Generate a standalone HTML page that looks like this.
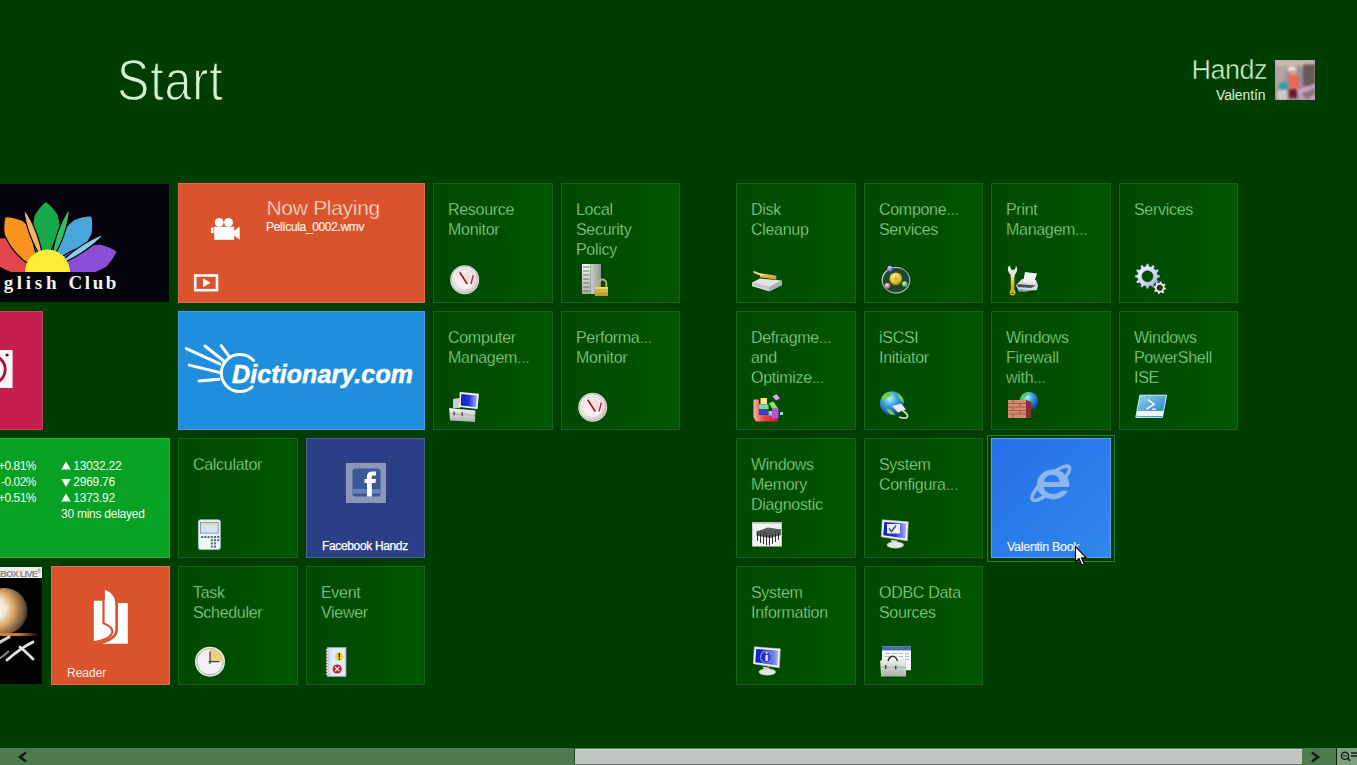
<!DOCTYPE html>
<html><head><meta charset="utf-8">
<style>
html,body{margin:0;padding:0;}
body{width:1357px;height:765px;overflow:hidden;background:#003d00;position:relative;font-family:"Liberation Sans",sans-serif;}
.a{position:absolute;}
.t{position:absolute;box-sizing:border-box;overflow:hidden;}
.g{background:linear-gradient(to right,#004a00 0%,#004c00 35%,#005700 100%);border:1px solid #1b611b;width:120px;height:120px;}
.lbl{position:absolute;left:14px;top:15.5px;color:#98de94;font-size:16px;line-height:20px;letter-spacing:-0.3px;white-space:nowrap;-webkit-text-stroke:0.35px #005000;}
.ic{position:absolute;left:14px;top:78px;width:32px;height:32px;}
.c::after{content:"";position:absolute;left:0;top:0;right:0;bottom:0;box-shadow:inset 0 0 0 1px rgba(255,255,255,0.16);}
.cap{position:absolute;color:#fff;font-size:12px;white-space:nowrap;}
</style></head><body>

<!-- header -->
<div class="a" style="left:117px;top:48px;color:#d6f2cf;font-size:57px;line-height:64px;letter-spacing:1px;-webkit-text-stroke:1.3px #003d00;transform:scaleX(0.85);transform-origin:0 0;">Start</div>
<div class="a" style="left:1150px;top:55px;width:117px;text-align:right;color:#d6f2cf;font-size:27px;line-height:30px;letter-spacing:-0.5px;-webkit-text-stroke:0.5px #003d00;">Handz</div>
<div class="a" style="left:1148.5px;top:87px;width:117px;text-align:right;color:#d6f2cf;font-size:14px;line-height:16px;letter-spacing:-0.1px;">Valentín</div>
<svg class="a" style="left:1275px;top:60px;" width="40" height="40">
<defs><linearGradient id="av" x1="0" y1="0" x2="1" y2="1"><stop offset="0" stop-color="#b0a0a0"/><stop offset="0.55" stop-color="#9a8a90"/><stop offset="1" stop-color="#b898b8"/></linearGradient>
<filter id="avb" x="-10%" y="-10%" width="120%" height="120%"><feGaussianBlur stdDeviation="1.1"/></filter><clipPath id="avc"><rect width="40" height="40"/></clipPath></defs>
<rect width="40" height="40" fill="url(#av)"/>
<g filter="url(#avb)" clip-path="url(#avc)">
<rect x="0" y="0" width="40" height="6" fill="#c8b8b0"/>
<rect x="28" y="4" width="12" height="22" fill="#5a5048" opacity="0.8"/>
<rect x="0" y="6" width="10" height="22" fill="#b8a8a8" opacity="0.7"/>
<path d="M22,30 L40,24 L40,40 L26,40 Z" fill="#c8a0c8"/>
<path d="M26,34 L40,28 L40,34 L32,40 Z" fill="#6a6a50" opacity="0.7"/>
<ellipse cx="17" cy="9" rx="4.5" ry="2.5" fill="#f0ece8"/>
<ellipse cx="18" cy="12.5" rx="3.2" ry="2.8" fill="#e0a090"/>
<path d="M13,16 C16,14 21,14 23,17 L25,29 L13,30 Z" fill="#e86a5a"/>
<rect x="14" y="29" width="8" height="9" fill="#6a1a28"/>
<ellipse cx="9" cy="26" rx="5.5" ry="4.5" fill="#30a0a0"/>
<rect x="2" y="30" width="10" height="10" fill="#e8e0e0" opacity="0.7"/>
</g></svg>

<!-- group 1 -->
<div class="t" style="left:-78px;top:184px;width:247px;height:118px;background:#05040c;">
<svg class="a" style="left:0;top:0" width="247" height="118">
<path transform="translate(125.5,88) rotate(-155.7)" d="M0,0 C17.0,-16.5 37.4,-18.0 54.4,-13.5 Q63.3,-7.5 68.0,0 Q63.3,7.5 54.4,13.5 C37.4,18.0 17.0,16.5 0,0 Z" fill="#e2474d" stroke="#05040c" stroke-width="1.2"/>
<path transform="translate(125.5,88) rotate(-127.4)" d="M0,0 C17.5,-14.3 38.4,-15.6 55.9,-11.7 Q65.0,-6.5 69.8,0 Q65.0,6.5 55.9,11.7 C38.4,15.6 17.5,14.3 0,0 Z" fill="#f7941d" stroke="#05040c" stroke-width="1.2"/>
<path transform="translate(125.5,88) rotate(-91.3)" d="M0,0 C17.7,-14.9 38.9,-16.2 56.7,-12.2 Q65.9,-6.8 70.8,0 Q65.9,6.8 56.7,12.2 C38.9,16.2 17.7,14.9 0,0 Z" fill="#17a84c" stroke="#05040c" stroke-width="1.2"/>
<path transform="translate(125.5,88) rotate(-51.9)" d="M0,0 C17.9,-14.3 39.4,-15.6 57.3,-11.7 Q66.6,-6.5 71.6,0 Q66.6,6.5 57.3,11.7 C39.4,15.6 17.9,14.3 0,0 Z" fill="#4aa7da" stroke="#05040c" stroke-width="1.2"/>
<path transform="translate(125.5,88) rotate(-16.5)" d="M0,0 C18.2,-14.9 40.0,-16.2 58.1,-12.2 Q67.6,-6.8 72.7,0 Q67.6,6.8 58.1,12.2 C40.0,16.2 18.2,14.9 0,0 Z" fill="#8b4fd6" stroke="#05040c" stroke-width="1.2"/>
<path transform="translate(125.5,88) rotate(-110.6)" d="M13.5,0 C26.9,-4.0 50.5,-5.0 67.3,0 C50.5,5.0 26.9,4.0 13.5,0 Z" fill="#f4b469" stroke="#05040c" stroke-width="1.2"/>
<path transform="translate(125.5,88) rotate(-70.9)" d="M13.5,0 C27.1,-4.0 50.8,-5.0 67.7,0 C50.8,5.0 27.1,4.0 13.5,0 Z" fill="#33c065" stroke="#05040c" stroke-width="1.2"/>
<path transform="translate(125.5,88) rotate(-33.7)" d="M13.7,0 C27.4,-3.6 51.4,-4.5 68.5,0 C51.4,4.5 27.4,3.6 13.7,0 Z" fill="#8ccbea" stroke="#05040c" stroke-width="1.2"/>
<path d="M103,88 A22.5,22.5 0 0 1 148,88 Z" fill="#fbec36"/>
<rect x="0" y="88" width="247" height="30" fill="#05040c"/>
</svg>
<div class="a" style="left:51px;top:88px;color:#f4f4f4;font-family:'Liberation Serif',serif;font-weight:bold;font-size:19px;line-height:22px;letter-spacing:3.7px;white-space:nowrap;">English</div>
<div class="a" style="left:146.5px;top:88px;color:#f4f4f4;font-family:'Liberation Serif',serif;font-weight:bold;font-size:19px;line-height:22px;letter-spacing:2.6px;white-space:nowrap;">Club</div>
</div>
<div class="t c" style="left:178px;top:183px;width:247px;height:120px;background:#da532c;">
<div class="a" style="left:88.5px;top:11.5px;color:#fbe3d8;font-size:21px;line-height:26px;letter-spacing:-0.3px;-webkit-text-stroke:0.4px #da532c;">Now Playing</div>
<div class="a" style="left:88px;top:37px;color:#fdeee6;font-size:12px;line-height:14px;letter-spacing:-0.35px;-webkit-text-stroke:0.2px #fdeee6;">Película_0002.wmv</div>
<svg class="a" style="left:0;top:0" width="247" height="120">
<circle cx="41.2" cy="39.4" r="4.4" fill="#fff"/><circle cx="50.5" cy="39.4" r="4.4" fill="#fff"/>
<rect x="36.2" y="43.7" width="20" height="13.1" fill="#fff"/>
<path d="M56,48 L61.7,43.5 L61.7,56.8 L56,52.5 Z" fill="#fff"/>
<rect x="33" y="44.5" width="2.6" height="5.5" fill="#fff"/>
<rect x="17.2" y="92.5" width="21.8" height="14.7" fill="none" stroke="#fff" stroke-width="2.6"/>
<path d="M25,95.3 L32.5,99.8 L25,104.2 Z" fill="#fff"/>
</svg></div>
<div class="t c" style="left:-77px;top:311px;width:120px;height:119px;background:#c41e4c;">
<svg class="a" style="left:0;top:0" width="120" height="119">
<rect x="40" y="39" width="49.6" height="38" fill="#fff5f7"/>
<circle cx="68" cy="58.5" r="14.2" fill="none" stroke="#a01238" stroke-width="2.8"/>
<circle cx="84.1" cy="44" r="1.6" fill="#5a1830"/>
</svg></div>
<div class="t c" style="left:178px;top:311px;width:247px;height:119px;background:#1f8fdc;">
<svg class="a" style="left:0;top:0" width="247" height="119">
<g stroke="#fff" stroke-width="3" stroke-linecap="round" fill="none">
<path d="M8.4,37.6 L41.9,52.9"/><path d="M27,35 L45.3,49.5"/><path d="M43.2,34.6 L50.4,44.4"/>
<path d="M11.3,54.1 L41,61.4"/><path d="M21.1,69.9 L41,68.2"/>
<path d="M75.5,49.5 A18.5,18.5 0 1 0 74.2,75.8" stroke-width="3"/>
</g></svg>
<div class="a" style="left:54px;top:48.5px;color:#fff;font-size:25px;line-height:28px;font-weight:bold;font-style:italic;letter-spacing:0.1px;-webkit-text-stroke:0.5px #fff;">Dictionary.com</div>
</div>
<div class="t c" style="left:-78px;top:438px;width:248px;height:120px;background:#07a123;color:#effff0;font-size:12px;line-height:16px;letter-spacing:-0.25px;">
<div class="a" style="left:63.5px;top:20px;width:50.5px;text-align:right;letter-spacing:-0.5px;">+0.81%<br>-0.02%<br>+0.51%</div>
<div class="a" style="left:139px;top:20px;">&nbsp;&nbsp;&nbsp;&nbsp;13032.22<br>&nbsp;&nbsp;&nbsp;&nbsp;2969.76<br>&nbsp;&nbsp;&nbsp;&nbsp;1373.92<br>30 mins delayed</div>
<svg class="a" style="left:0;top:0" width="248" height="119">
<path d="M139.3,31.5 L144,23.5 L148.8,31.5 Z M139.3,41 L148.8,41 L144,49 Z M139.3,63.5 L144,55.5 L148.8,63.5 Z" fill="#effff0"/>
</svg>
</div>
<div class="t g" style="left:178px;top:438px;width:120px;height:120px;"><div class="lbl">Calculator</div></div>
<div class="t c" style="left:306px;top:438px;width:119px;height:120px;background:#2a3f85;">
<svg class="a" style="left:0;top:0" width="119" height="119">
<rect x="40" y="25" width="40" height="40" fill="#8c96b6"/>
<rect x="46.5" y="30.5" width="28" height="28" rx="3" fill="#3b5998"/>
<rect x="46.5" y="51" width="28" height="4.5" fill="#6b82b8"/>
<path d="M61,58.5 L61,45 L58.5,45 L58.5,41 L61,41 L61,38.5 C61,35 63,33.5 66.5,33.5 L70,33.5 L70,37.5 L67.5,37.5 C66.2,37.5 65.8,38 65.8,39.2 L65.8,41 L70,41 L69.5,45 L65.8,45 L65.8,58.5 Z" fill="#fff"/>
</svg>
<div class="cap" style="left:16px;top:100.5px;font-size:12px;line-height:14px;letter-spacing:-0.35px;-webkit-text-stroke:0.25px #fff;">Facebook Handz</div>
</div>
<div class="t" style="left:-77px;top:567px;width:119px;height:117px;background:#030203;">
<div class="a" style="left:0;top:0;width:119px;height:11px;background:#f2efe8;"></div>
<div class="a" style="left:71.6px;top:-2.3px;color:#8a8a8e;font-size:9.5px;line-height:12px;font-weight:bold;letter-spacing:-0.9px;white-space:nowrap;">XBOX LIVE<sup style="font-size:5px;vertical-align:4px">®</sup></div>
<svg class="a" style="left:0;top:0" width="119" height="117">
<defs><radialGradient id="xs" cx="0.3" cy="0.45" r="0.75"><stop offset="0" stop-color="#ffffff"/><stop offset="0.3" stop-color="#f4e4cc"/><stop offset="0.55" stop-color="#d8a060"/><stop offset="0.85" stop-color="#6a5038"/><stop offset="1" stop-color="#1a120a"/></radialGradient>
<linearGradient id="xr" x1="0" x2="1"><stop offset="0" stop-color="#e09040"/><stop offset="0.7" stop-color="#c87a2a"/><stop offset="1" stop-color="#c87a2a" stop-opacity="0"/></linearGradient></defs>
<circle cx="81.5" cy="44" r="23" fill="url(#xs)"/>
<rect x="50" y="66" width="66" height="3" fill="url(#xr)"/>
<path d="M60,88 C66,80 76,76 86,70" stroke="#d8d2cc" stroke-width="3.2" fill="none" stroke-linecap="round"/>
<path d="M84,93 C92,86 100,80 110,75 M97,80 C102,84 106,88 110,92" stroke="#e8e4e0" stroke-width="2.8" fill="none" stroke-linecap="round"/>
<path d="M58,98 C70,96 80,90 86,84" stroke="#8a8480" stroke-width="2" fill="none"/>
</svg></div>
<div class="t c" style="left:51px;top:566px;width:119px;height:119px;background:#da532c;">
<svg class="a" style="left:0;top:0" width="119" height="119">
<path d="M42.8,34.7 L53.9,34.7 L53.9,23.7 C59.5,26 64.1,30 64.1,36 L64.1,36.9 L76.8,36.9 L76.8,77.7 L46,77.7 L42.8,76 Z" fill="#fff"/>
<path d="M52.5,34.5 L52.5,57.3 C58,59.5 61.5,62 61.4,66 C60.5,71 53,74.5 42,76.4" stroke="#da532c" stroke-width="2.2" fill="none"/>
<path d="M65.6,36.5 L65.6,65 C65,71 57,75.5 44,78.5" stroke="#da532c" stroke-width="2.6" fill="none"/>
</svg>
<div class="cap" style="left:16px;top:99.5px;font-size:12px;line-height:14px;color:#fdeee6;">Reader</div>
</div>
</div>
<div class="t g" style="left:178px;top:566px;width:120px;height:119px;"><div class="lbl">Task<br>Scheduler</div></div>
<div class="t g" style="left:306px;top:566px;width:119px;height:119px;"><div class="lbl">Event<br>Viewer</div></div>

<!-- group 2 -->
<div class="t g" style="left:433px;top:183px;width:120px;height:120px;"><div class="lbl">Resource<br>Monitor</div></div>
<div class="t g" style="left:561px;top:183px;width:119px;height:120px;"><div class="lbl">Local<br>Security<br>Policy</div></div>
<div class="t g" style="left:433px;top:311px;width:120px;height:119px;"><div class="lbl">Computer<br>Managem...</div></div>
<div class="t g" style="left:561px;top:311px;width:119px;height:119px;"><div class="lbl">Performa...<br>Monitor</div></div>

<!-- group 3 -->
<div class="t g" style="left:736px;top:183px;width:120px;height:120px;"><div class="lbl">Disk<br>Cleanup</div></div>
<div class="t g" style="left:864px;top:183px;width:119px;height:120px;"><div class="lbl">Compone...<br>Services</div></div>
<div class="t g" style="left:991px;top:183px;width:120px;height:120px;"><div class="lbl">Print<br>Managem...</div></div>
<div class="t g" style="left:1119px;top:183px;width:119px;height:120px;"><div class="lbl">Services</div></div>
<div class="t g" style="left:736px;top:311px;width:120px;height:119px;"><div class="lbl">Defragme...<br>and<br>Optimize...</div></div>
<div class="t g" style="left:864px;top:311px;width:119px;height:119px;"><div class="lbl">iSCSI<br>Initiator</div></div>
<div class="t g" style="left:991px;top:311px;width:120px;height:119px;"><div class="lbl">Windows<br>Firewall<br>with...</div></div>
<div class="t g" style="left:1119px;top:311px;width:119px;height:119px;"><div class="lbl">Windows<br>PowerShell<br>ISE</div></div>
<div class="t g" style="left:736px;top:438px;width:120px;height:120px;"><div class="lbl">Windows<br>Memory<br>Diagnostic</div></div>
<div class="t g" style="left:864px;top:438px;width:119px;height:120px;"><div class="lbl">System<br>Configura...</div></div>
<div class="a" style="left:987px;top:434.5px;width:128px;height:127px;box-sizing:border-box;border:1.5px solid #2a7a3a;background:#003d00;"></div>
<div class="t" style="left:991px;top:438px;width:120px;height:120px;background:linear-gradient(135deg,#2670e8,#3088ec);border:1px solid #5a9ef0;">
<svg class="a" style="left:0;top:0" width="120" height="120">
<defs><mask id="iem"><rect width="120" height="120" fill="#fff"/><ellipse cx="61" cy="45.5" rx="15.8" ry="14.5" fill="#000"/></mask>
<mask id="ieh"><rect width="120" height="120" fill="#fff"/><path d="M52.3,42.9 A7.7,7.2 0 0 1 67.7,42.9 Z M51.8,48.1 C52.5,52.5 56,55 61,55 C64.5,55 67.5,53.8 69.5,51.8 L80,51.8 L80,48.1 Z" fill="#000"/></mask></defs>
<g mask="url(#ieh)"><ellipse cx="61" cy="45.5" rx="16.3" ry="15" fill="#8cb6ec"/></g>
<g mask="url(#iem)"><ellipse transform="translate(58.8,44.2) rotate(-42)" rx="24.6" ry="6.8" fill="none" stroke="#8cb6ec" stroke-width="3.6"/></g>
</svg>
<div class="cap" style="left:15px;top:100.5px;font-size:12.5px;line-height:14px;color:#eef4ff;letter-spacing:-0.3px;-webkit-text-stroke:0.2px #eef4ff;">Valentin Book</div>
</div>
<svg class="a" style="left:1074px;top:545px;" width="14" height="22"><path d="M1.5,1.5 L1.5,17 L5,13.5 L7.8,20 L10.2,19 L7.5,12.8 L12.3,12.8 Z" fill="#fff" stroke="#000" stroke-width="1.1" stroke-linejoin="round"/></svg>
<div class="t g" style="left:736px;top:566px;width:120px;height:119px;"><div class="lbl">System<br>Information</div></div>
<div class="t g" style="left:864px;top:566px;width:119px;height:119px;"><div class="lbl">ODBC Data<br>Sources</div></div>

<!-- icons -->
<svg class="a" style="left:0;top:0;" width="1357" height="765">
<defs>
<radialGradient id="gface" cx="0.4" cy="0.35" r="0.7"><stop offset="0" stop-color="#ffffff"/><stop offset="0.7" stop-color="#f0e8ec"/><stop offset="1" stop-color="#c9c4c8"/></radialGradient>
<linearGradient id="gsilver" x1="0" y1="0" x2="0" y2="1"><stop offset="0" stop-color="#f4f6f4"/><stop offset="1" stop-color="#a9b0a9"/></linearGradient>
<linearGradient id="gside" x1="0" y1="0" x2="1" y2="0"><stop offset="0" stop-color="#c9d0cc"/><stop offset="1" stop-color="#8c9690"/></linearGradient>
<linearGradient id="ggold" x1="0" y1="0" x2="0" y2="1"><stop offset="0" stop-color="#f7df6a"/><stop offset="1" stop-color="#c0901c"/></linearGradient>
<linearGradient id="gscreen" x1="0" y1="0" x2="1" y2="0"><stop offset="0" stop-color="#1020b8"/><stop offset="0.5" stop-color="#2436d0"/><stop offset="1" stop-color="#aab4f0"/></linearGradient>
<linearGradient id="gps" x1="0" y1="0" x2="1" y2="1"><stop offset="0" stop-color="#8fd6f4"/><stop offset="1" stop-color="#1d78c0"/></linearGradient>
<radialGradient id="gglobe" cx="0.4" cy="0.3" r="0.7"><stop offset="0" stop-color="#b8f4ff"/><stop offset="0.45" stop-color="#3aa0e0"/><stop offset="1" stop-color="#1c3aa8"/></radialGradient>
<radialGradient id="gyel" cx="0.4" cy="0.35" r="0.7"><stop offset="0" stop-color="#fff7a0"/><stop offset="0.6" stop-color="#e8c020"/><stop offset="1" stop-color="#8a6a00"/></radialGradient>
<g id="gauge">
<circle r="14.5" fill="#d7dcd7"/>
<circle r="13.2" fill="url(#gface)" stroke="#aeb8ae" stroke-width="0.8"/>
<circle r="10.5" fill="#f6eef0" stroke="#d8c6c8" stroke-width="0.8"/>
<path d="M-5,-7.5 L2.6,4.3" stroke="#9a1c22" stroke-width="1.7" fill="none"/>
<path d="M6.3,4.3 L8.6,-4.6" stroke="#b8282e" stroke-width="1.5" fill="none"/>
<path d="M-2,-6 L4,2 L7,-3 L4,-8 Z" fill="#f2d0cc" opacity="0.6"/>
</g>
<g id="monitor">
<path d="M0.5,0 L26.5,2 L25.5,21 L-0.5,17 Z" fill="#eef2f6" stroke="#b8c2cc" stroke-width="0.6"/>
<path d="M2.5,2.2 L24.5,3.8 L23.6,18.8 L1.5,15.4 Z" fill="url(#gscreen)"/>
<path d="M9,20 L16,21 L15,23 L10,22.5 Z" fill="#d8dcd8"/>
<ellipse cx="13.5" cy="25.2" rx="8.4" ry="3.2" fill="#e4e6e2" stroke="#b0b8b0" stroke-width="0.5"/>
</g>
<g id="toolbox">
<path d="M0,14 L4,8 L22,9 L26,15 L25,30 L1,30 Z" fill="#d9e0dc"/>
<path d="M0,14 L26,15 L25,30 L1,30 Z" fill="url(#gsilver)"/>
<path d="M0,20 L26,21" stroke="#9aa4a0" stroke-width="0.8"/>
<rect x="4.5" y="18" width="1.5" height="4" fill="#4a5450"/><rect x="18" y="19" width="1.5" height="4" fill="#4a5450"/>
</g>
</defs>

<!-- Resource Monitor / Performance Monitor -->
<use href="#gauge" x="464.7" y="279.7"/>
<use href="#gauge" x="592.7" y="407.2"/>

<!-- Local Security Policy -->
<rect x="582" y="264" width="8.5" height="30" fill="url(#gsilver)"/>
<g stroke="#5f6a66" stroke-width="0.9"><path d="M583,267 H589.5 M583,271 H589.5 M583,275 H589.5 M583,279 H589.5 M583,283 H589.5 M583,287 H589.5 M583,291 H589.5"/></g>
<rect x="590.5" y="264" width="10.5" height="30" fill="url(#gside)"/>
<path d="M598.3,287 L598.3,283.5 A4,4 0 0 1 606.3,283.5 L606.3,287" stroke="#c8b46a" stroke-width="1.8" fill="none"/>
<rect x="595" y="287" width="13" height="9" fill="url(#ggold)"/>
<path d="M595,290 H608 M595,293 H608" stroke="#b08420" stroke-width="0.6"/>

<!-- Computer Management -->
<path d="M453,399 L459.5,398 L460,408 L453,408 Z" fill="#c8d0cc"/>
<path d="M459.7,392 L479,393.8 L477.5,409 L459.2,407 Z" fill="#f0f4fa"/>
<path d="M461.2,394 L477.2,395.4 L476,407.2 L460.8,405.6 Z" fill="url(#gscreen)"/>
<path d="M449.2,408 L475.4,410.5 L475,422 L450,420.5 Z" fill="url(#gsilver)"/>
<path d="M449.5,413.5 L475,415.5" stroke="#9aa4a0" stroke-width="0.7"/>
<rect x="453.5" y="411.5" width="1.4" height="4" fill="#4a5450"/><rect x="461.5" y="412" width="1.4" height="4" fill="#4a5450"/>
<!-- Calculator -->
<rect x="198.4" y="519.8" width="22" height="29.8" rx="2" fill="#e6f4fb" stroke="#a8c8d8" stroke-width="0.7"/>
<rect x="200.6" y="522.5" width="17.6" height="10.6" fill="#d4e2f2" stroke="#6a7c96" stroke-width="0.7"/>
<rect x="201.5" y="523.3" width="15.8" height="2" fill="#e8d8a0"/>
<g fill="#56686c">
<rect x="201.2" y="536" width="2" height="2"/><rect x="204.4" y="536" width="2" height="2"/><rect x="207.6" y="536" width="2" height="2"/><rect x="210.8" y="536" width="2" height="2"/><rect x="214" y="536" width="2" height="2"/><rect x="217.2" y="536" width="2" height="2"/>
<rect x="210.8" y="539.2" width="2" height="2"/><rect x="214" y="539.2" width="2" height="2"/><rect x="217.2" y="539.2" width="2" height="2"/>
<rect x="210.8" y="542.4" width="2" height="2"/><rect x="214" y="542.4" width="2" height="2"/>
<rect x="210.8" y="545.6" width="2" height="2"/><rect x="214" y="545.6" width="2" height="2"/>
</g>
<g fill="#ffffff"><rect x="201.2" y="539.2" width="2.4" height="2"/><rect x="204.4" y="539.2" width="2.4" height="2"/><rect x="207.6" y="539.2" width="2.4" height="2"/>
<rect x="201.2" y="542.4" width="2.4" height="2"/><rect x="204.4" y="542.4" width="2.4" height="2"/><rect x="207.6" y="542.4" width="2.4" height="2"/>
<rect x="201.2" y="545.6" width="2.4" height="2"/><rect x="204.4" y="545.6" width="2.4" height="2"/><rect x="207.6" y="545.6" width="2.4" height="2"/></g>

<!-- Task Scheduler clock -->
<circle cx="210" cy="661.7" r="15" fill="#e4efe6"/>
<circle cx="210" cy="661.7" r="13.2" fill="#f2f0f6" stroke="#9aa09a" stroke-width="0.8"/>
<path d="M210,661.7 L210,648.5 A13.2,13.2 0 0 1 223.2,661.7 Z" fill="#f1cf82"/>
<path d="M210,651.5 L210,664 M208.5,661.7 L219.5,661.7" stroke="#3f4a48" stroke-width="1.3"/>

<!-- Event Viewer -->
<rect x="327.5" y="647.5" width="18.5" height="29" fill="#d8def4" stroke="#98a2b8" stroke-width="0.8"/>
<rect x="331.5" y="649" width="13" height="26" fill="#e6eaf8"/>
<g fill="#f4f6f4" stroke="#8a9290" stroke-width="0.5"><circle cx="327.3" cy="650" r="1.2"/><circle cx="327.3" cy="653" r="1.2"/><circle cx="327.3" cy="656" r="1.2"/><circle cx="327.3" cy="659" r="1.2"/><circle cx="327.3" cy="662" r="1.2"/><circle cx="327.3" cy="665" r="1.2"/><circle cx="327.3" cy="668" r="1.2"/><circle cx="327.3" cy="671" r="1.2"/><circle cx="327.3" cy="674" r="1.2"/></g>
<circle cx="339.2" cy="656.5" r="4.3" fill="#ecd640"/>
<rect x="338.6" y="653" width="1.4" height="4.5" fill="#1a1a10"/><rect x="338.6" y="658.5" width="1.4" height="1.4" fill="#1a1a10"/>
<circle cx="337.2" cy="669" r="4.6" fill="#c0282c"/>
<path d="M335,666.8 L339.4,671.2 M339.4,666.8 L335,671.2" stroke="#fff" stroke-width="1.2"/>

<!-- Disk Cleanup -->
<path d="M752,282.6 L760,278.5 L782,280.5 L769.5,287.3 Z" fill="#e8e2ea"/>
<path d="M752,282.6 L769.5,287.3 L769.5,291.5 L752,286.2 Z" fill="#d8dcd6"/>
<path d="M769.5,287.3 L782,280.5 L782,285.2 L769.5,291.5 Z" fill="#b0b4c0"/>
<path d="M753,284.5 L768,288.5" stroke="#a8a0b8" stroke-width="0.6"/>
<path d="M760,273.2 L776.3,275.8 L776.3,279.5 L760,277.3 Z" fill="url(#ggold)"/>
<path d="M754.3,272.1 L762.2,275.3" stroke="#e8d890" stroke-width="2" stroke-linecap="round"/>
<path d="M762,276.5 L776,279" stroke="#f0a040" stroke-width="0.8"/>
<!-- Component Services -->
<defs><linearGradient id="gring" x1="0" y1="0" x2="1" y2="1"><stop offset="0" stop-color="#e8f4ec"/><stop offset="0.5" stop-color="#6a9a7a"/><stop offset="1" stop-color="#a8c8b0"/></linearGradient>
<radialGradient id="gbl" cx="0.35" cy="0.3" r="0.7"><stop offset="0" stop-color="#d8d8ff"/><stop offset="1" stop-color="#4a48b8"/></radialGradient>
<radialGradient id="gpk" cx="0.35" cy="0.3" r="0.7"><stop offset="0" stop-color="#ffe0e8"/><stop offset="1" stop-color="#c85a6a"/></radialGradient>
<radialGradient id="ggr" cx="0.35" cy="0.3" r="0.7"><stop offset="0" stop-color="#d8ffd0"/><stop offset="1" stop-color="#3a9a4a"/></radialGradient></defs>
<ellipse cx="896" cy="280.2" rx="14.5" ry="13.5" fill="#1a4a2c" stroke="#0e2a18" stroke-width="2"/>
<ellipse cx="896" cy="280.2" rx="13.8" ry="12.8" fill="none" stroke="url(#gring)" stroke-width="1.4"/>
<circle cx="895.9" cy="278.9" r="6.4" fill="url(#gyel)"/>
<path d="M895.9,274.8 V283.2 M891.7,278.9 H900.1" stroke="#f8e070" stroke-width="1.2"/>
<path d="M895.9,275.5 V282.5 M892.5,278.9 H899.3" stroke="#a86a08" stroke-width="0.5"/>
<circle cx="890.2" cy="268.8" r="3" fill="url(#gbl)"/>
<circle cx="887.5" cy="285.7" r="2.8" fill="url(#gpk)"/>
<circle cx="904.8" cy="284.1" r="2.8" fill="url(#ggr)"/>
<!-- Print Management -->
<path d="M1016,285 L1022,279 L1036,280 L1038,285 L1037,290 L1019,291.5 Z" fill="#d6dada"/>
<path d="M1025,272 L1037,273.5 L1034,283 L1023,282 Z" fill="#f4f2f4"/>
<path d="M1017,284 L1036,285.5 L1031,288 L1018,287 Z" fill="#4a4e5a"/>
<path d="M1019,289 L1028,290 L1027,292 L1019,291 Z" fill="#74a8c8"/>
<rect x="1010.8" y="276" width="3.6" height="17" fill="url(#ggold)"/><circle cx="1012.6" cy="292.5" r="2.2" fill="none" stroke="#d8b040" stroke-width="1.4"/>
<path d="M1009.5,265.5 C1007,267.5 1007.5,272 1010.5,274.5 L1010.8,277 L1014.4,277 L1014.8,274.5 C1017.5,272.5 1018,268 1016,266 L1014.8,269.5 L1011.8,270 Z" fill="#e2e6e8"/>

<!-- Services gears -->
<defs><linearGradient id="ggear" x1="0" y1="0" x2="1" y2="1"><stop offset="0" stop-color="#f4f8ff"/><stop offset="0.6" stop-color="#c8d8f0"/><stop offset="1" stop-color="#8aa0c8"/></linearGradient></defs>
<g transform="translate(1147.5,276.3)"><path d="M10.07,-1.60 L12.55,-1.12 L12.55,1.12 L10.07,1.60 L9.52,3.66 L11.43,5.31 L10.31,7.25 L7.93,6.42 L6.42,7.93 L7.25,10.31 L5.31,11.43 L3.66,9.52 L1.60,10.07 L1.12,12.55 L-1.12,12.55 L-1.60,10.07 L-3.66,9.52 L-5.31,11.43 L-7.25,10.31 L-6.42,7.93 L-7.93,6.42 L-10.31,7.25 L-11.43,5.31 L-9.52,3.66 L-10.07,1.60 L-12.55,1.12 L-12.55,-1.12 L-10.07,-1.60 L-9.52,-3.66 L-11.43,-5.31 L-10.31,-7.25 L-7.93,-6.42 L-6.42,-7.93 L-7.25,-10.31 L-5.31,-11.43 L-3.66,-9.52 L-1.60,-10.07 L-1.12,-12.55 L1.12,-12.55 L1.60,-10.07 L3.66,-9.52 L5.31,-11.43 L7.25,-10.31 L6.42,-7.93 L7.93,-6.42 L10.31,-7.25 L11.43,-5.31 L9.52,-3.66 Z M5.6,0 A5.6,5.6 0 1 0 -5.6,0 A5.6,5.6 0 1 0 5.6,0 Z" fill="url(#ggear)" fill-rule="evenodd" stroke="#1a3a4a" stroke-width="0.5"/></g>
<g transform="translate(1159.8,287.8) rotate(10)"><path d="M5.06,-1.21 L6.74,-0.91 L6.74,0.91 L5.06,1.21 L4.43,2.72 L5.41,4.13 L4.13,5.41 L2.72,4.43 L1.21,5.06 L0.91,6.74 L-0.91,6.74 L-1.21,5.06 L-2.72,4.43 L-4.13,5.41 L-5.41,4.13 L-4.43,2.72 L-5.06,1.21 L-6.74,0.91 L-6.74,-0.91 L-5.06,-1.21 L-4.43,-2.72 L-5.41,-4.13 L-4.13,-5.41 L-2.72,-4.43 L-1.21,-5.06 L-0.91,-6.74 L0.91,-6.74 L1.21,-5.06 L2.72,-4.43 L4.13,-5.41 L5.41,-4.13 L4.43,-2.72 Z M2.8,0 A2.8,2.8 0 1 0 -2.8,0 A2.8,2.8 0 1 0 2.8,0 Z" fill="#eef4ee" fill-rule="evenodd" stroke="#1a2a2a" stroke-width="0.6"/></g>
<!-- Defrag -->
<defs><linearGradient id="gdf" x1="0" y1="0" x2="1" y2="0"><stop offset="0" stop-color="#ffb0a8"/><stop offset="0.4" stop-color="#e84a40"/><stop offset="1" stop-color="#c02020"/></linearGradient></defs>
<path d="M753.5,399.5 L758.8,399.5 L758.8,415 L776,415 L778.5,421.5 L756,421.5 L753.5,417 Z" fill="url(#gdf)"/>
<rect x="760.5" y="398" width="6.5" height="6" fill="#f8e890"/>
<rect x="759" y="404.3" width="9.5" height="5" fill="#88d8a0"/>
<rect x="759" y="409.5" width="9" height="5.2" fill="#3040e8"/>
<rect x="768.5" y="411" width="4" height="4.5" fill="#80d0f0"/>
<rect x="772" y="408.5" width="6.5" height="10" fill="#c050e0"/>
<path d="M769,403 L773.5,401.5 L778,408.5 L772,408.5 Z" fill="#90e070"/>
<path d="M772.5,396.5 L776.5,394 L780,398.5 L776,400.5 Z" fill="#e0a0f8"/>
<rect x="780" y="412" width="3" height="3" fill="#80e0d0"/>
<!-- iSCSI globe -->
<circle cx="892" cy="403.2" r="12" fill="url(#gglobe)"/>
<path d="M882,397 C885,392 890,391 893,393 C890,397 887,399 882,400 Z M897,393 C901,395 904,398 903.8,403 C901,402 899,399 897,393 Z M886,409 C889,408 893,411 895,415 C891,415.5 888,413 886,409 Z" fill="#6cd24a"/>
<path d="M892,406 L901,403.5 L906,409.5 L898,412.5 Z" fill="#e4ecec"/>
<path d="M902,410 C906,413 909,415 907,417.5 C905,419 902,418 899,417" stroke="#c8d6d0" stroke-width="1.8" fill="none"/>

<!-- Firewall -->
<circle cx="1028.9" cy="400.9" r="9.2" fill="url(#gglobe)"/>
<path d="M1020,399 C1022,394 1026,392 1030,392.5 C1027,396 1024,399 1020,400 Z" fill="#5ace4a"/>
<rect x="1008" y="400" width="18" height="18" fill="#d68a72"/>
<path d="M1026,400 L1031.3,402 L1031.3,418 L1026,418 Z" fill="#8a3030"/>
<g stroke="#a04c3c" stroke-width="0.8"><path d="M1008,403.5 H1026 M1008,407 H1026 M1008,410.5 H1026 M1008,414 H1026 M1013,400 V403.5 M1020,403.5 V407 M1013,407 V410.5 M1020,410.5 V414 M1013,414 V418"/></g>

<!-- PowerShell -->
<path d="M1139.9,395.2 L1166.6,395.2 L1162.4,417.4 L1135.8,417.4 Z" fill="url(#gps)" stroke="#cdeefa" stroke-width="1"/>
<path d="M1137.5,411 L1163.5,411 L1162.6,416 L1136.6,416 Z" fill="#eef4f6"/>
<path d="M1148,399.5 L1154,404.5 L1146.5,409" stroke="#ffffff" stroke-width="1.6" fill="none"/>
<path d="M1152,409.2 H1156" stroke="#ffffff" stroke-width="1.2"/>

<!-- Memory Diagnostic -->
<rect x="752.2" y="522.2" width="29.6" height="24.3" fill="#f4f2f6"/>
<rect x="752.2" y="522.2" width="29.6" height="1.5" fill="#b8c4b8"/>
<path d="M756.5,531.5 L768,527.5 L781,529.5 L781,535 L770,538 L756.5,535.5 Z" fill="#5a5e5c"/>
<path d="M756.5,531.5 L770,533.5 L781,529.5" stroke="#3a3c3a" stroke-width="0.6" fill="none"/>
<g stroke="#1a1c1a" stroke-width="0.9"><path d="M757.5,533 V541 M760.5,533.5 V543 M763.5,534 V544 M766.5,534.5 V545 M769.5,535 V545.5 M772.5,534.5 V544 M775.5,533.5 V542 M778.5,532.5 V540"/></g>
<!-- System Configuration -->
<use href="#monitor" x="881.8" y="519.8"/>
<rect x="887" y="524" width="13" height="9.5" fill="#eef0fa"/>
<path d="M889,528.5 L891.5,531.5 L896,525.5" stroke="#2a5a80" stroke-width="1.6" fill="none"/>

<!-- System Information -->
<use href="#monitor" x="753.8" y="646.8"/>
<circle cx="766.5" cy="657" r="6" fill="none" stroke="#8090e0" stroke-width="1.2"/>
<rect x="765.5" y="655" width="2.2" height="6" fill="#e8ecff"/><circle cx="766.6" cy="652.8" r="1.1" fill="#e8ecff"/>

<!-- ODBC -->
<rect x="882" y="646.2" width="29" height="24" fill="#f6f8f6"/>
<rect x="882" y="646.2" width="29" height="4.2" fill="#4a6ab0"/>
<g stroke="#a8b0c0" stroke-width="0.9"><path d="M885,653.5 H890 M892,653.5 H897 M899,653.5 H903 M905,653.5 H909 M885,656.5 H890 M892,656.5 H897 M899,656.5 H903 M905,656.5 H909 M899,659.5 H903 M905,659.5 H909"/></g>
<path d="M880.2,661 L884,658.3 L902,659 L906.4,661.5 L906,676.6 L881,676.6 Z" fill="url(#gsilver)"/>
<path d="M880.5,667 L906,667.5" stroke="#98a098" stroke-width="0.7"/>
<path d="M888,661 C889,657 892,655.5 894,656.5 C896,657.5 897,659 897.5,661" stroke="#222" stroke-width="1.3" fill="none"/>
<rect x="885" y="665" width="1.4" height="4" fill="#3a423e"/><rect x="895" y="665.5" width="1.4" height="4" fill="#3a423e"/>
</svg>

<!-- scrollbar -->
<div class="a" style="left:0;top:748px;width:1357px;height:17px;background:#4f7a50;"></div>
<div class="a" style="left:574px;top:748px;width:1px;height:17px;background:#2a4a2a;"></div><div class="a" style="left:575px;top:748.5px;width:727px;height:15.5px;background:#c0c6be;border-top:1px solid #d0e0cc;box-sizing:border-box;"></div><div class="a" style="left:575px;top:764px;width:727px;height:1px;background:#6a706a;"></div>
<div class="a" style="left:1336px;top:748px;width:1px;height:17px;background:#0a200a;"></div><div class="a" style="left:1337px;top:748px;width:20px;height:17px;background:#7ea27c;"></div>
<svg class="a" style="left:0;top:748px" width="1357" height="17">
<path d="M26,4.5 L20,9 L26,13.5" stroke="#102010" stroke-width="2.6" fill="none"/>
<path d="M1312,4.5 L1318,9 L1312,13.5" stroke="#102010" stroke-width="2.6" fill="none"/>
<circle cx="1345" cy="7.8" r="3.6" fill="none" stroke="#1a1a1a" stroke-width="1.4"/><path d="M1343.2,7.8 H1346.8" stroke="#1a1a1a" stroke-width="1"/>
<path d="M1347.5,10 L1350,13" stroke="#1a1a1a" stroke-width="1.6"/>
<path d="M1351,5 H1357 M1351,8 H1357" stroke="#1a1a1a" stroke-width="1.6"/>
</svg>
</body></html>
